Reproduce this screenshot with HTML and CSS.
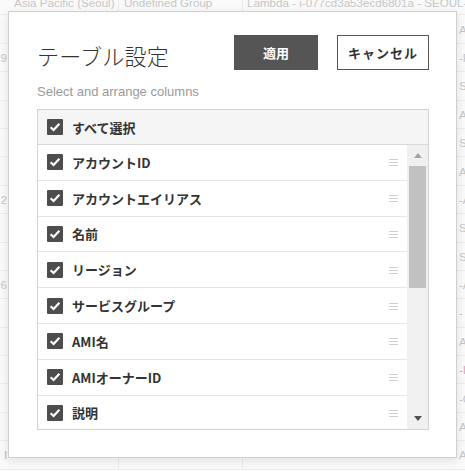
FILE: index.html
```html
<!DOCTYPE html>
<html lang="ja">
<head>
<meta charset="utf-8">
<title>テーブル設定</title>
<link rel="stylesheet" href="styles.css">
</head>
<body>
<div class="page">
  <div class="bgtable">
    <div class="brow"><span class="c0"></span><span class="c1">Asia Pacific (Seoul)</span><span class="c2">Undefined Group</span><span class="c3">Lambda - i-077cd3a53ecd6801a - SEOUL-A</span><span class="c4"></span></div>
    <div class="brow"><span class="c0"></span><span class="c1"></span><span class="c2"></span><span class="c3"></span><span class="c4">A-</span></div>
    <div class="brow"><span class="c0">9</span><span class="c1"></span><span class="c2"></span><span class="c3"></span><span class="c4">-F</span></div>
    <div class="brow"><span class="c0"></span><span class="c1"></span><span class="c2"></span><span class="c3"></span><span class="c4">S</span></div>
    <div class="brow"><span class="c0"></span><span class="c1"></span><span class="c2"></span><span class="c3"></span><span class="c4">A</span></div>
    <div class="brow"><span class="c0"></span><span class="c1"></span><span class="c2"></span><span class="c3"></span><span class="c4">S</span></div>
    <div class="brow"><span class="c0"></span><span class="c1"></span><span class="c2"></span><span class="c3"></span><span class="c4">A</span></div>
    <div class="brow"><span class="c0">2</span><span class="c1"></span><span class="c2"></span><span class="c3"></span><span class="c4">-A</span></div>
    <div class="brow"><span class="c0"></span><span class="c1"></span><span class="c2"></span><span class="c3"></span><span class="c4">SE</span></div>
    <div class="brow"><span class="c0"></span><span class="c1"></span><span class="c2"></span><span class="c3"></span><span class="c4">SE</span></div>
    <div class="brow"><span class="c0">6</span><span class="c1"></span><span class="c2"></span><span class="c3"></span><span class="c4">-A</span></div>
    <div class="brow"><span class="c0"></span><span class="c1"></span><span class="c2"></span><span class="c3"></span><span class="c4">-</span></div>
    <div class="brow"><span class="c0"></span><span class="c1"></span><span class="c2"></span><span class="c3"></span><span class="c4">A</span></div>
    <div class="brow"><span class="c0"></span><span class="c1"></span><span class="c2"></span><span class="c3"></span><span class="c4 pink">-I</span></div>
    <div class="brow"><span class="c0"></span><span class="c1"></span><span class="c2"></span><span class="c3"></span><span class="c4">-C</span></div>
    <div class="brow"><span class="c0"></span><span class="c1"></span><span class="c2"></span><span class="c3"></span><span class="c4">A</span></div>
    <div class="brow"><span class="c0 pink">l</span><span class="c1"></span><span class="c2"></span><span class="c3"></span><span class="c4">A-</span></div>
  </div>

  <div class="modal">
    <div class="mhead">
      <h1 class="title">テーブル設定</h1>
      <button class="btn btn-apply">適用</button>
      <button class="btn btn-cancel">キャンセル</button>
    </div>
    <p class="sub">Select and arrange columns</p>
    <div class="list">
      <div class="list-head">
        <span class="cb"><svg width="16" height="16" viewBox="0 0 16 16"><rect width="16" height="16" rx="1" fill="#4d4d4d"/><polyline points="3.6,8.2 6.6,11 12.4,4.8" fill="none" stroke="#fff" stroke-width="2.2"/></svg></span>
        <span class="label">すべて選択</span>
      </div>
      <div class="list-body">
        <div class="rows">
          <div class="row"><span class="cb"><svg width="16" height="16" viewBox="0 0 16 16"><rect width="16" height="16" rx="1" fill="#4d4d4d"/><polyline points="3.6,8.2 6.6,11 12.4,4.8" fill="none" stroke="#fff" stroke-width="2.2"/></svg></span><span class="label">アカウントID</span><svg class="handle" width="9" height="8" viewBox="0 0 9 8"><path d="M0 1.5H9M0 4.5H9M0 7.5H9" stroke="#cfcfcf" stroke-width="1"/></svg></div>
          <div class="row"><span class="cb"><svg width="16" height="16" viewBox="0 0 16 16"><rect width="16" height="16" rx="1" fill="#4d4d4d"/><polyline points="3.6,8.2 6.6,11 12.4,4.8" fill="none" stroke="#fff" stroke-width="2.2"/></svg></span><span class="label">アカウントエイリアス</span><svg class="handle" width="9" height="8" viewBox="0 0 9 8"><path d="M0 1.5H9M0 4.5H9M0 7.5H9" stroke="#cfcfcf" stroke-width="1"/></svg></div>
          <div class="row"><span class="cb"><svg width="16" height="16" viewBox="0 0 16 16"><rect width="16" height="16" rx="1" fill="#4d4d4d"/><polyline points="3.6,8.2 6.6,11 12.4,4.8" fill="none" stroke="#fff" stroke-width="2.2"/></svg></span><span class="label">名前</span><svg class="handle" width="9" height="8" viewBox="0 0 9 8"><path d="M0 1.5H9M0 4.5H9M0 7.5H9" stroke="#cfcfcf" stroke-width="1"/></svg></div>
          <div class="row"><span class="cb"><svg width="16" height="16" viewBox="0 0 16 16"><rect width="16" height="16" rx="1" fill="#4d4d4d"/><polyline points="3.6,8.2 6.6,11 12.4,4.8" fill="none" stroke="#fff" stroke-width="2.2"/></svg></span><span class="label">リージョン</span><svg class="handle" width="9" height="8" viewBox="0 0 9 8"><path d="M0 1.5H9M0 4.5H9M0 7.5H9" stroke="#cfcfcf" stroke-width="1"/></svg></div>
          <div class="row"><span class="cb"><svg width="16" height="16" viewBox="0 0 16 16"><rect width="16" height="16" rx="1" fill="#4d4d4d"/><polyline points="3.6,8.2 6.6,11 12.4,4.8" fill="none" stroke="#fff" stroke-width="2.2"/></svg></span><span class="label">サービスグループ</span><svg class="handle" width="9" height="8" viewBox="0 0 9 8"><path d="M0 1.5H9M0 4.5H9M0 7.5H9" stroke="#cfcfcf" stroke-width="1"/></svg></div>
          <div class="row"><span class="cb"><svg width="16" height="16" viewBox="0 0 16 16"><rect width="16" height="16" rx="1" fill="#4d4d4d"/><polyline points="3.6,8.2 6.6,11 12.4,4.8" fill="none" stroke="#fff" stroke-width="2.2"/></svg></span><span class="label">AMI名</span><svg class="handle" width="9" height="8" viewBox="0 0 9 8"><path d="M0 1.5H9M0 4.5H9M0 7.5H9" stroke="#cfcfcf" stroke-width="1"/></svg></div>
          <div class="row"><span class="cb"><svg width="16" height="16" viewBox="0 0 16 16"><rect width="16" height="16" rx="1" fill="#4d4d4d"/><polyline points="3.6,8.2 6.6,11 12.4,4.8" fill="none" stroke="#fff" stroke-width="2.2"/></svg></span><span class="label">AMIオーナーID</span><svg class="handle" width="9" height="8" viewBox="0 0 9 8"><path d="M0 1.5H9M0 4.5H9M0 7.5H9" stroke="#cfcfcf" stroke-width="1"/></svg></div>
          <div class="row"><span class="cb"><svg width="16" height="16" viewBox="0 0 16 16"><rect width="16" height="16" rx="1" fill="#4d4d4d"/><polyline points="3.6,8.2 6.6,11 12.4,4.8" fill="none" stroke="#fff" stroke-width="2.2"/></svg></span><span class="label">説明</span><svg class="handle" width="9" height="8" viewBox="0 0 9 8"><path d="M0 1.5H9M0 4.5H9M0 7.5H9" stroke="#cfcfcf" stroke-width="1"/></svg></div>
        </div>
        <div class="sbar">
          <div class="sb-btn"><span class="arrow-up"></span></div>
          <div class="thumb"></div>
          <div class="sb-space"></div>
          <div class="sb-btn"><span class="arrow-down"></span></div>
        </div>
      </div>
    </div>
  </div>
</div>
</body>
</html>
```

FILE: styles.css
```css
* { box-sizing: border-box; }
html, body { margin: 0; padding: 0; }
body {
  width: 465px;
  height: 471px;
  overflow: hidden;
  background: #fafafa;
  font-family: "Noto Sans CJK JP", "Liberation Sans", sans-serif;
}
.page {
  position: relative;
  width: 465px;
  height: 471px;
  overflow: hidden;
}

/* faded background table */
.bgtable {
  margin-top: -13px;
  font-family: "Liberation Sans", Arial, sans-serif;
  font-size: 11.6px;
  color: #c6c6c6;
}
.brow {
  display: flex;
  height: 28.4px;
  border-bottom: 1px solid #ededed;
  align-items: center;
  white-space: nowrap;
}
.brow span { overflow: hidden; }
.c0 { width: 7px; text-align: right; direction: rtl; }
.c1 { width: 112px; padding-left: 7px; border-right: 1px solid #ebebeb; height: 100%; display: flex; align-items: center; padding-top: 4px; }
.c2 { width: 124px; padding-left: 5px; border-right: 1px solid #ebebeb; height: 100%; display: flex; align-items: center; padding-top: 4px; }
.c3 { width: 215px; padding-left: 4px; height: 100%; display: flex; align-items: center; padding-top: 4px; overflow: visible !important; }
.c4 { flex: 1; padding-left: 1px; }
.pink { color: #e3a3b3; }

/* modal */
.modal {
  position: absolute;
  left: 8px;
  top: 11px;
  width: 449px;
  height: 447px;
  background: #fff;
  border: 1px solid #cfcfcf;
  box-shadow: 0 3px 10px rgba(0, 0, 0, 0.10);
  padding: 23px 27px 0 28px;
}
.mhead {
  display: flex;
  align-items: center;
  height: 35px;
}
.title {
  flex: 1;
  margin: 4px 0 0 0;
  font-size: 22px;
  font-weight: 300;
  line-height: 1;
  color: #333;
  letter-spacing: 0.2px;
}
.btn {
  height: 35px;
  font-family: "Noto Sans CJK JP", sans-serif;
  font-size: 13px;
  font-weight: 700;
  padding: 0;
  cursor: pointer;
}
.btn-apply {
  width: 84px;
  margin-right: 19px;
  background: #555;
  color: #fff;
  border: none;
}
.btn-cancel {
  width: 92px;
  background: #fff;
  color: #333;
  border: 1px solid #555;
  letter-spacing: 1px;
}
.sub {
  margin: 14px 0 10px 0;
  font-family: "Liberation Sans", Arial, sans-serif;
  font-size: 13px;
  line-height: 15px;
  color: #9a9a9a;
}
.list {
  height: 321px;
  border: 1px solid #d3d3d3;
  display: flex;
  flex-direction: column;
}
.list-head {
  height: 35px;
  flex: none;
  background: #f5f5f5;
  border-bottom: 1px solid #d9d9d9;
  display: flex;
  align-items: center;
  padding-left: 9px;
}
.cb {
  width: 16px;
  height: 16px;
  flex: none;
  display: block;
}
.cb svg { display: block; }
.label {
  flex: 1;
  margin-left: 9px;
  font-size: 13px;
  font-weight: 700;
  color: #333;
  line-height: 1;
}
.list-body {
  flex: 1;
  display: flex;
  min-height: 0;
}
.rows {
  flex: 1;
  overflow: hidden;
}
.row {
  height: 35.8px;
  border-bottom: 1px solid #e6e6e6;
  display: flex;
  align-items: center;
  padding: 0 9px 0 9px;
}
.handle { display: block; flex: none; }

/* scrollbar */
.sbar {
  width: 21px;
  flex: none;
  background: #f0f0f0;
  display: flex;
  flex-direction: column;
}
.sb-btn {
  height: 21px;
  flex: none;
  display: flex;
  align-items: center;
  justify-content: center;
}
.arrow-up {
  width: 0; height: 0;
  border-left: 4.5px solid transparent;
  border-right: 4.5px solid transparent;
  border-bottom: 5px solid #a3a3a3;
}
.arrow-down {
  width: 0; height: 0;
  border-left: 4.5px solid transparent;
  border-right: 4.5px solid transparent;
  border-top: 5px solid #505050;
}
.thumb {
  height: 122px;
  margin: 0 2px;
  background: #c1c1c1;
  flex: none;
}
.sb-space { flex: 1; }
```
